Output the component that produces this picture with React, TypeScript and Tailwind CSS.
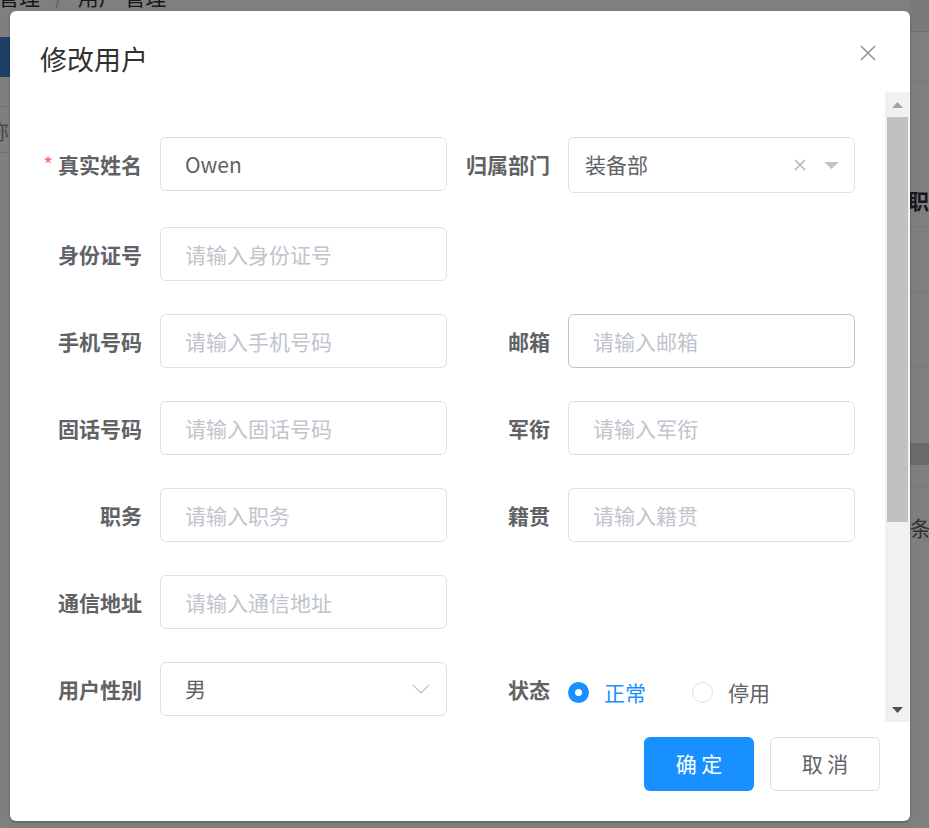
import React from "react";

type FieldProps = { label: string; required?: boolean; children: React.ReactNode };

function Field({ label, required, children }: FieldProps) {
  return (
    <div className="flex items-start">
      <div className="w-[120px] shrink-0 pr-[18px] text-right text-[21px] font-bold leading-[54px] text-[#606266] whitespace-nowrap">
        {required && <span className="mr-[5px] font-normal text-[#f56c6c]">*</span>}
        {label}
      </div>
      <div className="min-w-0 flex-1">{children}</div>
    </div>
  );
}

function TextInput({ value, placeholder, hover }: { value?: string; placeholder?: string; hover?: boolean }) {
  return (
    <div
      className={
        hover
          ? "h-[54px] rounded-[6px] border border-[#c0c4cc] bg-white pl-[24px] text-[21px] leading-[52px] text-[#c0c4cc]"
          : value
          ? "h-[54px] rounded-[6px] border border-[#dcdfe6] bg-white pl-[24px] text-[21px] leading-[52px] text-[#606266]"
          : "h-[54px] rounded-[6px] border border-[#dcdfe6] bg-white pl-[24px] text-[21px] leading-[52px] text-[#c0c4cc]"
      }
    >
      {value || placeholder}
    </div>
  );
}

function Row({ children, first }: { children: React.ReactNode; first?: boolean }) {
  return <div className={first ? "mb-[34px] grid grid-cols-2 gap-x-px" : "mb-[33px] grid grid-cols-2 gap-x-px"}>{children}</div>;
}

function Background() {
  return (
    <div className="absolute inset-0 flex flex-col bg-white">
      <div className="flex h-[32px] shrink-0">
        <div className="-mt-[14px] ml-[-44px] flex-1 whitespace-nowrap text-[21px] leading-[21px] text-[#303133]">
          系统管理 <span className="mx-[10px] text-[#c0c4cc]">/</span> 用户 管理
        </div>
        <div className="w-[19px] border-b border-[#d8dce5] bg-[#f4f4f4]" />
      </div>
      <div className="flex flex-1">
        <div className="flex w-[10px] flex-col overflow-hidden">
          <div className="h-[5px]" />
          <div className="h-[40px] bg-[#3d7fd0]" />
          <div className="h-[30px] border-b border-[#dcdfe6]" />
          <div className="ml-[-12px] h-[46px] whitespace-nowrap border-b border-[#dcdfe6] text-[21px] leading-[46px] text-[#909399]">称</div>
        </div>
        <div className="flex-1" />
        <div className="flex w-[19px] flex-col overflow-visible">
          <div className="h-[50px] border-b border-[#ebeef5]" />
          <div className="h-[78px]" />
          <div className="ml-[-2px] h-[67px] whitespace-nowrap border-b border-[#ebeef5] pt-[13px] text-[21px] font-bold leading-[54px] text-[#303133]">职务</div>
          <div className="h-[65px] border-b border-[#ebeef5]" />
          <div className="h-[75px] border-b border-[#ebeef5]" />
          <div className="h-[76px]" />
          <div className="h-[22px] bg-[#d6d6d6]" />
          <div className="h-[22px] border-b border-[#ebeef5]" />
          <div className="h-[51px] whitespace-nowrap border-b border-[#ebeef5] pt-[30px] text-[21px] leading-[20px] text-[#606266]">条/页</div>
        </div>
      </div>
    </div>
  );
}

export default function App() {
  return (
    <div className="relative h-[828px] w-[929px] overflow-hidden font-['Noto_Sans_CJK_SC','Noto_Sans',sans-serif]">
      <Background />
      <div className="absolute inset-0 bg-black/50" />
      <div className="absolute left-[10px] top-[11px] w-[900px] overflow-hidden rounded-[6px] bg-white shadow-[0_1px_3px_rgba(0,0,0,0.3)]">
        {/* header */}
        <div className="relative px-[30px] pb-[15px] pt-[30px]">
          <div className="text-[27px] leading-[36px] text-[#303133]">修改用户</div>
          <button className="absolute right-[30px] top-[30px] flex h-[24px] w-[24px] items-center justify-center">
            <svg width="16" height="16" viewBox="0 0 16 16">
              <path d="M1 1L15 15M15 1L1 15" stroke="#909399" strokeWidth="1.5" fill="none" />
            </svg>
          </button>
        </div>
        {/* body */}
        <div className="flex h-[630px]">
          <div className="flex-1 overflow-hidden px-[30px] pt-[45px]">
            <Row first>
              <Field label="真实姓名" required>
                <TextInput value="Owen" />
              </Field>
              <Field label="归属部门">
                <div className="flex h-[56px] items-center rounded-[6px] border border-[#dcdfe6] bg-white pl-[16px] pr-[15px]">
                  <span className="flex-1 text-[21px] text-[#606266]">装备部</span>
                  <svg width="12" height="12" viewBox="0 0 12 12" className="mr-[18px]">
                    <path d="M1 1L11 11M11 1L1 11" stroke="#c0c4cc" strokeWidth="1.8" fill="none" />
                  </svg>
                  <svg width="15" height="7" viewBox="0 0 15 7">
                    <path d="M0 0H15L7.5 7Z" fill="#c0c4cc" />
                  </svg>
                </div>
              </Field>
            </Row>
            <Row>
              <Field label="身份证号">
                <TextInput placeholder="请输入身份证号" />
              </Field>
              <div />
            </Row>
            <Row>
              <Field label="手机号码">
                <TextInput placeholder="请输入手机号码" />
              </Field>
              <Field label="邮箱">
                <TextInput placeholder="请输入邮箱" hover />
              </Field>
            </Row>
            <Row>
              <Field label="固话号码">
                <TextInput placeholder="请输入固话号码" />
              </Field>
              <Field label="军衔">
                <TextInput placeholder="请输入军衔" />
              </Field>
            </Row>
            <Row>
              <Field label="职务">
                <TextInput placeholder="请输入职务" />
              </Field>
              <Field label="籍贯">
                <TextInput placeholder="请输入籍贯" />
              </Field>
            </Row>
            <Row>
              <Field label="通信地址">
                <TextInput placeholder="请输入通信地址" />
              </Field>
              <div />
            </Row>
            <Row>
              <Field label="用户性别">
                <div className="flex h-[54px] items-center rounded-[6px] border border-[#dcdfe6] bg-white pl-[24px] pr-[16px]">
                  <span className="flex-1 text-[21px] text-[#606266]">男</span>
                  <svg width="18" height="10" viewBox="0 0 18 10">
                    <path d="M1 1L9 9L17 1" stroke="#c0c4cc" strokeWidth="1.3" fill="none" />
                  </svg>
                </div>
              </Field>
              <Field label="状态">
                <div className="flex h-[54px] items-center pt-[6px]">
                  <span className="flex h-[21px] w-[21px] items-center justify-center rounded-full bg-[#1890ff]">
                    <span className="h-[7px] w-[7px] rounded-full bg-white" />
                  </span>
                  <span className="ml-[15px] text-[21px] leading-[30px] text-[#1890ff]">正常</span>
                  <span className="ml-[46px] h-[21px] w-[21px] rounded-full border border-[#dcdfe6] bg-white" />
                  <span className="ml-[15px] text-[21px] leading-[30px] text-[#606266]">停用</span>
                </div>
              </Field>
            </Row>
            <Row>
              <Field label="角色">
                <TextInput placeholder="请选择角色" />
              </Field>
              <div />
            </Row>
          </div>
          {/* fake scrollbar */}
          <div className="flex w-[25px] shrink-0 flex-col bg-[#f1f1f1]">
            <div className="flex h-[25px] items-center justify-center">
              <svg width="11" height="6" viewBox="0 0 11 6">
                <path d="M0 6L5.5 0L11 6Z" fill="#a3a3a3" />
              </svg>
            </div>
            <div className="flex-1 px-[2px]">
              <div className="h-[405px] bg-[#c1c1c1]" />
            </div>
            <div className="flex h-[25px] items-center justify-center">
              <svg width="11" height="6" viewBox="0 0 11 6">
                <path d="M0 0H11L5.5 6Z" fill="#505050" />
              </svg>
            </div>
          </div>
        </div>
        {/* footer */}
        <div className="flex justify-end gap-[16px] px-[30px] pb-[30px] pt-[15px]">
          <button className="h-[54px] w-[110px] rounded-[6px] bg-[#1890ff] text-[21px] text-white">确 定</button>
          <button className="h-[54px] w-[110px] rounded-[6px] border border-[#dcdfe6] bg-white text-[21px] text-[#606266]">取 消</button>
        </div>
      </div>
    </div>
  );
}
